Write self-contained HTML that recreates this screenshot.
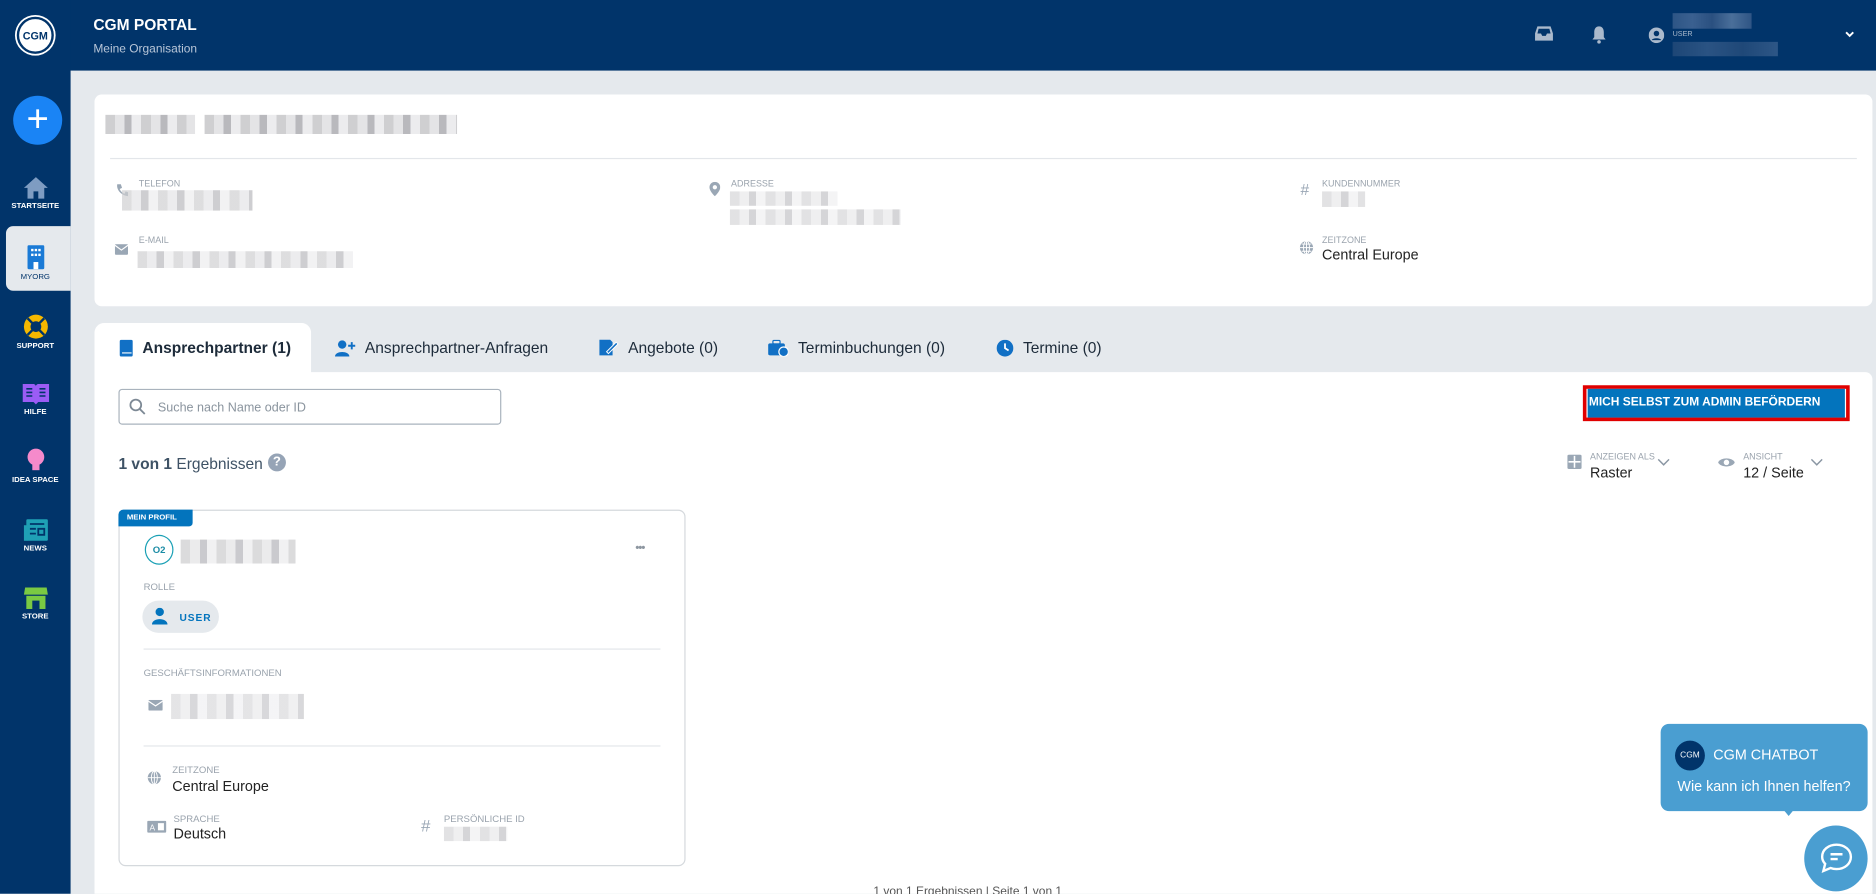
<!DOCTYPE html>
<html><head><meta charset="utf-8"><style>
*{box-sizing:border-box;margin:0;padding:0}
html,body{width:1876px;height:894px;overflow:hidden;background:#e5e9ed;font-family:"Liberation Sans",sans-serif}
#w{width:1568px;height:747px;transform:scale(1.19643);transform-origin:0 0;position:relative;background:#e5e9ed}
.a{position:absolute}
.hdr{left:0;top:0;width:1568px;height:59px;background:#01346a}
.side{left:0;top:0;width:59px;height:747px;background:#01346a}
.nav{position:absolute;left:0;width:59px;text-align:center;color:#fff;font-size:6.5px;font-weight:bold}
.blur{position:absolute;background:repeating-linear-gradient(90deg,#cfcfd1 0 8px,#e4e4e6 8px 16px,#b9b9bd 16px 22px,#ececee 22px 30px)}
.lbl{font-size:7.5px;color:#9aa3ad;position:absolute}
.val{font-size:12px;color:#222;position:absolute}
.ic{position:absolute;fill:#9aa7b5}
.tab{position:absolute;top:270px;height:41px;font-size:13px;color:#1d2b3a;display:flex;align-items:center;gap:8px}
</style></head><body><div id="w">
<div class="a hdr"></div>
<div class="a side"></div>
<div class="a" style="left:14px;top:14px;width:31px;height:31px;border-radius:50%;background:#fff;border:2px solid #01346a;box-shadow:0 0 0 1.5px #fff;display:flex;align-items:center;justify-content:center;font-size:9px;font-weight:bold;color:#01346a">CGM</div>
<div class="a" style="left:78px;top:13px;color:#fff;font-weight:bold;font-size:13px">CGM PORTAL</div>
<div class="a" style="left:78px;top:36px;color:#b8c6d8;font-size:10px">Meine Organisation</div>
<svg class="a" style="left:1283px;top:21px" width="15" height="14" viewBox="0 0 15 14"><path d="M2 1h11l2 6v6H0V7z" fill="#aab9cc"/><path d="M3 3h9l1 4H10l-1 2H6L5 7H2z" fill="#01346a"/></svg>
<svg class="a" style="left:1330px;top:21px" width="13" height="16" viewBox="0 0 13 16"><path d="M6.5 1C3.5 1 2.5 3.5 2.5 6v4L1 12h11l-1.5-2V6C10.5 3.5 9.5 1 6.5 1z" fill="#aab9cc"/><circle cx="6.5" cy="14" r="1.5" fill="#aab9cc"/></svg>
<svg class="a" style="left:1378px;top:23px" width="13" height="13" viewBox="0 0 13 13"><circle cx="6.5" cy="6.5" r="6.5" fill="#aab9cc"/><circle cx="6.5" cy="5" r="2.3" fill="#01346a"/><path d="M2.5 10.5c1-2 7-2 8 0" fill="#01346a"/></svg>
<div class="a" style="left:1398px;top:11px;width:66px;height:13px;background:linear-gradient(90deg,#2d5585,#3a6090,#2a5080,#4a6f9a,#2f5585)"></div>
<div class="a" style="left:1398px;top:26px;color:#aab9cc;font-size:6px">USER</div>
<div class="a" style="left:1398px;top:35px;width:88px;height:12px;background:linear-gradient(90deg,#1d4676,#2a5383,#1f4878,#2d5686)"></div>
<svg class="a" style="left:1542px;top:26px" width="8" height="6" viewBox="0 0 8 6"><path d="M1 1l3 3 3-3" stroke="#fff" stroke-width="1.6" fill="none"/></svg>
<div class="a" style="left:11px;top:80px;width:41px;height:41px;border-radius:50%;background:#1a84f5;color:#fff;font-size:32px;line-height:38px;text-align:center">+</div>
<div class="nav" style="top:147px"><svg width="22" height="20" viewBox="0 0 22 20"><path d="M11 1L1 10h3v9h5v-6h4v6h5v-9h3z" fill="#7e9cc2"/></svg><div>STARTSEITE</div></div>
<div class="a" style="left:5px;top:189px;width:54px;height:54px;background:#e5e9ed;border-radius:6px 0 0 6px"></div>
<div class="nav" style="top:204px;color:#01346a;font-weight:normal"><svg width="16" height="22" viewBox="0 0 16 22"><rect x="1" y="1" width="14" height="20" rx="1" fill="#1a7ad6"/><g fill="#fff"><rect x="4" y="4" width="2" height="2"/><rect x="7" y="4" width="2" height="2"/><rect x="10" y="4" width="2" height="2"/><rect x="4" y="8" width="2" height="2"/><rect x="7" y="8" width="2" height="2"/><rect x="10" y="8" width="2" height="2"/><rect x="6" y="15" width="4" height="6"/></g></svg><div>MYORG</div></div>
<div class="nav" style="top:262px"><svg width="22" height="22" viewBox="0 0 22 22"><circle cx="11" cy="11" r="10" fill="#f5b800"/><circle cx="11" cy="11" r="4.5" fill="#01346a"/><path d="M4 4l4 4M18 4l-4 4M4 18l4-4M18 18l-4-4" stroke="#01346a" stroke-width="2"/></svg><div>SUPPORT</div></div>
<div class="nav" style="top:319px"><svg width="24" height="20" viewBox="0 0 24 20"><path d="M1 2h9c1 0 2 1 2 2 0-1 1-2 2-2h9v15h-9l-2 2-2-2H1z" fill="#9b5cf5"/><path d="M4 6h5M4 9h5M4 12h5M15 6h5M15 9h5M15 12h5" stroke="#01346a" stroke-width="1.3"/></svg><div>HILFE</div></div>
<div class="nav" style="top:374px"><svg width="18" height="22" viewBox="0 0 18 22"><circle cx="9" cy="8" r="7" fill="#f58acb"/><rect x="6" y="14" width="6" height="5" fill="#f58acb"/></svg><div>IDEA SPACE</div></div>
<div class="nav" style="top:433px"><svg width="22" height="20" viewBox="0 0 22 20"><rect x="3" y="1" width="18" height="18" rx="1" fill="#1fa0b5"/><rect x="1" y="6" width="3" height="13" fill="#1fa0b5"/><path d="M6 5h12M6 9h5M6 13h5M13 9h5v5h-5z" stroke="#01346a" stroke-width="1.5" fill="none"/></svg><div>NEWS</div></div>
<div class="nav" style="top:490px"><svg width="22" height="20" viewBox="0 0 22 20"><path d="M2 1h18l1 6H1z" fill="#7ac943"/><rect x="3" y="8" width="16" height="11" fill="#7ac943"/><rect x="8" y="12" width="6" height="7" fill="#01346a"/></svg><div>STORE</div></div>

<div class="a" style="left:79px;top:79px;width:1486px;height:177px;background:#fff;border-radius:6px"></div>
<div class="blur" style="left:88px;top:96px;width:75px;height:16px"></div>
<div class="blur" style="left:171px;top:96px;width:211px;height:16px"></div>
<div class="a" style="left:92px;top:132px;width:1460px;height:1px;background:#e3e6ea"></div>
<svg class="ic" style="left:97px;top:153px" width="10" height="12" viewBox="0 0 10 12"><path d="M1 1l3 0 1 3-2 1c1 2 2 3 4 4l1-2 3 1v3C5 11 0 6 1 1z"/></svg>
<div class="lbl" style="left:116px;top:149px">TELEFON</div>
<div class="blur" style="left:102px;top:159px;width:109px;height:17px;opacity:.7"></div>
<svg class="ic" style="left:96px;top:204px" width="11" height="9" viewBox="0 0 11 9"><rect width="11" height="9" rx="1"/><path d="M0 1l5.5 4L11 1" stroke="#fff" fill="none"/></svg>
<div class="lbl" style="left:116px;top:196px">E-MAIL</div>
<div class="blur" style="left:115px;top:210px;width:180px;height:14px;opacity:.7"></div>
<svg class="ic" style="left:593px;top:152px" width="9" height="12" viewBox="0 0 9 12"><path d="M4.5 0A4.5 4.5 0 0 0 0 4.5C0 8 4.5 12 4.5 12S9 8 9 4.5A4.5 4.5 0 0 0 4.5 0zm0 6.3a1.8 1.8 0 1 1 0-3.6 1.8 1.8 0 0 1 0 3.6z"/></svg>
<div class="lbl" style="left:611px;top:149px">ADRESSE</div>
<div class="blur" style="left:610px;top:160px;width:90px;height:12px;opacity:.6"></div>
<div class="blur" style="left:610px;top:175px;width:143px;height:13px;opacity:.6"></div>
<div class="a" style="left:1087px;top:151px;color:#9aa7b5;font-size:13px">#</div>
<div class="lbl" style="left:1105px;top:149px">KUNDENNUMMER</div>
<div class="blur" style="left:1105px;top:160px;width:36px;height:13px;opacity:.6"></div>
<svg class="ic" style="left:1086px;top:201px" width="12" height="12" viewBox="0 0 12 12"><circle cx="6" cy="6" r="5.5"/><path d="M0.5 6h11M6 .5v11M2 3h8M2 9h8" stroke="#fff" stroke-width=".8"/><ellipse cx="6" cy="6" rx="2.5" ry="5.5" stroke="#fff" stroke-width=".8" fill="none"/></svg>
<div class="lbl" style="left:1105px;top:196px">ZEITZONE</div>
<div class="val" style="left:1105px;top:206px">Central Europe</div>

<div class="a" style="left:79px;top:270px;width:181px;height:45px;background:#fff;border-radius:8px 8px 0 0"></div>
<div class="a" style="left:79px;top:311px;width:1486px;height:436px;background:#fff;border-radius:0 6px 0 0"></div>
<div class="tab" style="left:100px;font-weight:bold"><svg width="11" height="14" viewBox="0 0 11 14"><rect width="11" height="14" rx="1.5" fill="#1170c5"/><path d="M2 11h8" stroke="#fff"/></svg>Ansprechpartner (1)</div>
<div class="tab" style="left:280px"><svg width="17" height="14" viewBox="0 0 17 14"><circle cx="6" cy="4" r="3.5" fill="#1170c5"/><path d="M0 14c0-5 12-5 12 0z" fill="#1170c5"/><path d="M14 2v6M11 5h6" stroke="#1170c5" stroke-width="1.6"/></svg>Ansprechpartner-Anfragen</div>
<div class="tab" style="left:500px"><svg width="17" height="15" viewBox="0 0 17 15"><path d="M1 1h9l2 2v11H1z" fill="#1170c5"/><path d="M7 11l8-8 1.5 1.5-8 8z" fill="#1170c5" stroke="#fff" stroke-width=".8"/></svg>Angebote (0)</div>
<div class="tab" style="left:642px"><svg width="17" height="14" viewBox="0 0 17 14"><rect x="0" y="3" width="14" height="10" rx="1.5" fill="#1170c5"/><rect x="4" y="0.5" width="6" height="3" rx="1" stroke="#1170c5" fill="none"/><circle cx="13" cy="10" r="4" fill="#1170c5" stroke="#fff"/></svg>Terminbuchungen (0)</div>
<div class="tab" style="left:833px"><svg width="14" height="14" viewBox="0 0 14 14"><circle cx="7" cy="7" r="7" fill="#1170c5"/><path d="M7 3v4l3 2" stroke="#fff" stroke-width="1.5" fill="none"/></svg>Termine (0)</div>

<div class="a" style="left:99px;top:325px;width:320px;height:30px;border:1px solid #a9b3bd;border-radius:3px"></div>
<svg class="a" style="left:108px;top:333px" width="14" height="14" viewBox="0 0 14 14"><circle cx="5.5" cy="5.5" r="4.5" stroke="#7d8995" stroke-width="1.5" fill="none"/><path d="M9 9l4 4" stroke="#7d8995" stroke-width="1.5"/></svg>
<div class="a" style="left:132px;top:335px;font-size:10.5px;color:#8a949e">Suche nach Name oder ID</div>
<div class="a" style="left:1323px;top:322px;width:223px;height:30px;border:3px solid #e00000;background:#fff"></div>
<div class="a" style="left:1327px;top:325px;width:215px;height:24px;background:#0374bd;color:#fff;font-size:10px;font-weight:bold;line-height:24px;padding-left:1px">MICH SELBST ZUM ADMIN BEFÖRDERN</div>

<div class="a" style="left:99px;top:380px;font-size:13px;color:#3e5265"><b>1 von 1</b> Ergebnissen</div>
<div class="a" style="left:224px;top:379px;width:15px;height:15px;border-radius:50%;background:#96a4b6;color:#fff;font-size:11px;font-weight:bold;text-align:center;line-height:15px">?</div>
<svg class="ic" style="left:1310px;top:380px" width="12" height="12" viewBox="0 0 12 12"><rect width="12" height="12" rx="1.5"/><path d="M6 1v10M1 6h10" stroke="#fff" stroke-width="1.3"/></svg>
<div class="lbl" style="left:1329px;top:377px">ANZEIGEN ALS</div>
<div class="val" style="left:1329px;top:388px">Raster</div>
<svg class="a" style="left:1385px;top:383px" width="11" height="7" viewBox="0 0 11 7"><path d="M1 1l4.5 4.5L10 1" stroke="#8a96a3" stroke-width="1.2" fill="none"/></svg>
<svg class="ic" style="left:1436px;top:381px" width="14" height="11" viewBox="0 0 14 11"><path d="M0 5.5C2 1 12 1 14 5.5 12 10 2 10 0 5.5z"/><circle cx="7" cy="5.5" r="2.3" fill="#fff"/></svg>
<div class="lbl" style="left:1457px;top:377px">ANSICHT</div>
<div class="val" style="left:1457px;top:388px">12 / Seite</div>
<svg class="a" style="left:1513px;top:383px" width="11" height="7" viewBox="0 0 11 7"><path d="M1 1l4.5 4.5L10 1" stroke="#8a96a3" stroke-width="1.2" fill="none"/></svg>

<div class="a" style="left:99px;top:426px;width:474px;height:298px;border:1px solid #d5d9dd;border-radius:6px"></div>
<div class="a" style="left:99px;top:426px;width:62px;height:14px;background:#0374bd;color:#fff;font-size:6.5px;font-weight:bold;line-height:14px;padding-left:7px;border-radius:4px 0 3px 0">MEIN PROFIL</div>
<div class="a" style="left:121px;top:447px;width:24px;height:25px;border:1px solid #1aa0b5;border-radius:50%;color:#1b8ca5;font-size:8px;font-weight:bold;text-align:center;line-height:23px">O2</div>
<div class="blur" style="left:151px;top:451px;width:96px;height:20px;opacity:.75"></div>
<div class="a" style="left:531px;top:453px;color:#8d96a0;font-size:10px;letter-spacing:-1px">•••</div>
<div class="lbl" style="left:120px;top:486px;font-size:8px">ROLLE</div>
<div class="a" style="left:119px;top:502px;width:64px;height:27px;background:#e5e9ed;border-radius:14px"></div>
<svg class="a" style="left:127px;top:508px" width="13" height="14" viewBox="0 0 13 14"><circle cx="6.5" cy="3.5" r="3.5" fill="#0374bd"/><path d="M0 14c0-6 13-6 13 0z" fill="#0374bd"/></svg>
<div class="a" style="left:150px;top:511px;color:#0374bd;font-weight:bold;font-size:8.5px;letter-spacing:.8px">USER</div>
<div class="a" style="left:120px;top:542px;width:432px;height:1px;background:#e3e6ea"></div>
<div class="lbl" style="left:120px;top:558px;font-size:8px">GESCHÄFTSINFORMATIONEN</div>
<svg class="ic" style="left:124px;top:585px" width="12" height="9" viewBox="0 0 12 9"><rect width="12" height="9" rx="1"/><path d="M0 1l6 4 6-4" stroke="#fff" fill="none"/></svg>
<div class="blur" style="left:143px;top:580px;width:111px;height:21px;opacity:.55"></div>
<div class="a" style="left:120px;top:623px;width:432px;height:1px;background:#e3e6ea"></div>
<svg class="ic" style="left:123px;top:644px" width="12" height="12" viewBox="0 0 12 12"><circle cx="6" cy="6" r="5.5"/><path d="M0.5 6h11M6 .5v11" stroke="#fff" stroke-width=".8"/><ellipse cx="6" cy="6" rx="2.5" ry="5.5" stroke="#fff" stroke-width=".8" fill="none"/></svg>
<div class="lbl" style="left:144px;top:639px;font-size:8px">ZEITZONE</div>
<div class="val" style="left:144px;top:650px">Central Europe</div>
<svg class="ic" style="left:123px;top:686px" width="16" height="10" viewBox="0 0 16 10"><rect width="16" height="10" rx="1"/><text x="2" y="8" font-size="7" fill="#fff" font-family="Liberation Sans">A</text><rect x="9" y="2" width="5" height="6" fill="#fff"/></svg>
<div class="lbl" style="left:145px;top:680px;font-size:8px">SPRACHE</div>
<div class="val" style="left:145px;top:690px">Deutsch</div>
<div class="a" style="left:352px;top:682px;color:#9aa7b5;font-size:14px">#</div>
<div class="lbl" style="left:371px;top:680px;font-size:8px">PERSÖNLICHE ID</div>
<div class="blur" style="left:371px;top:691px;width:53px;height:12px;opacity:.6"></div>

<div class="a" style="left:1388px;top:605px;width:173px;height:73px;background:#4a9ed1;border-radius:7px"></div>
<div class="a" style="left:1490px;top:676px;width:0;height:0;border-left:5px solid transparent;border-right:5px solid transparent;border-top:6px solid #4a9ed1"></div>
<div class="a" style="left:1400px;top:619px;width:25px;height:25px;border-radius:50%;background:#01346a;color:#fff;font-size:7px;text-align:center;line-height:25px">CGM</div>
<div class="a" style="left:1432px;top:624px;color:#fff;font-size:12px">CGM CHATBOT</div>
<div class="a" style="left:1402px;top:650px;color:#fff;font-size:12px">Wie kann ich Ihnen helfen?</div>
<div class="a" style="left:1508px;top:690px;width:53px;height:55px;border-radius:50%;background:#4a9ed1"></div>
<svg class="a" style="left:1521px;top:704px" width="28" height="26" viewBox="0 0 28 26"><path d="M14 2C7 2 2 6.5 2 12c0 2.5 1 4.5 2.5 6L3 24l6-2.5c1.5.6 3.2.9 5 .9 7 0 12-4.6 12-10.2S21 2 14 2z" stroke="#fff" stroke-width="2" fill="none"/><path d="M9 10h10M9 14h6" stroke="#fff" stroke-width="2"/></svg>
<div class="a" style="left:730px;top:740px;color:#555;font-size:10px">1 von 1 Ergebnissen | Seite 1 von 1</div>
</div></body></html>
